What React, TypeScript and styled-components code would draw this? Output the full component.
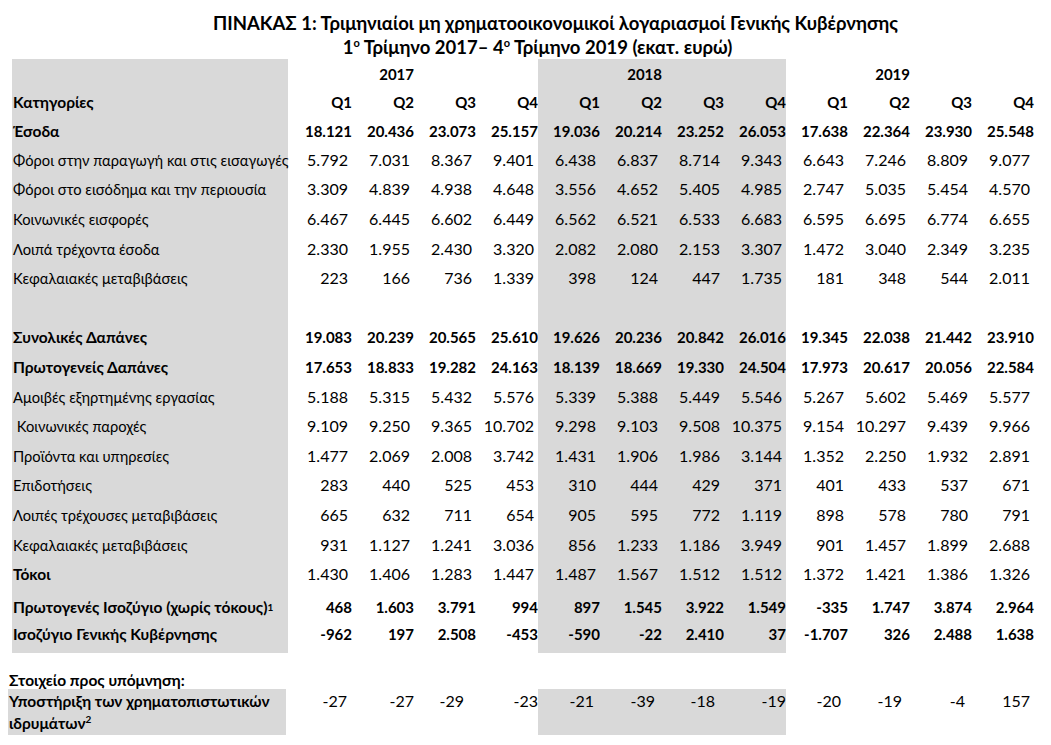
import styled, { createGlobalStyle } from 'styled-components'

const GlobalStyle = createGlobalStyle`
  body {
    margin: 0;
    background: #ffffff;
    color: #000000;
    font-family: Lato, 'Open Sans', 'Noto Sans', sans-serif;
  }
`

const GRAY = '#d9d9d9'

const Page = styled.div`
  width: 1051px;
  height: 745px;
  overflow: hidden;
  box-sizing: border-box;
`

const TitleBlock = styled.header`
  display: flex;
  flex-direction: column;
  align-items: center;
  padding: 11px 0 0 60px;
  height: 59px;
  box-sizing: border-box;
`

const TitleLine = styled.h1<{ $shift?: number }>`
  margin: 0;
  font-size: 18.5px;
  line-height: 24px;
  font-weight: 700;
  white-space: nowrap;
  transform: translateX(${p => p.$shift ?? 0}px);

  sup {
    font-size: 11px;
    line-height: 0;
    vertical-align: 7px;
  }
`

const Table = styled.section<{ $left: number }>`
  display: flex;
  flex-direction: column;
  padding-left: ${p => p.$left}px;
`

const Row = styled.div<{ $h?: number; $labelCol?: number }>`
  display: grid;
  grid-template-columns: ${p => p.$labelCol ?? 278}px repeat(12, 62px);
  height: ${p => p.$h ?? 29.6}px;
`

const LabelCell = styled.div<{ $bold?: boolean; $shaded?: boolean; $gap?: number; $pt?: number; $pb?: number }>`
  display: flex;
  align-items: center;
  margin-right: ${p => p.$gap ?? 2}px;
  padding: ${p => p.$pt ?? 0}px 0 ${p => p.$pb ?? 0}px 1px;
  background: ${p => (p.$shaded === false ? 'transparent' : GRAY)};
  font-size: ${p => (p.$bold ? 15.5 : 14.7)}px;
  font-weight: ${p => (p.$bold ? 700 : 400)};
  white-space: pre;
  line-height: 22px;

  sup {
    font-size: 10px;
    line-height: 0;
    vertical-align: 6px;
  }
`

const StackLabel = styled(LabelCell)`
  flex-direction: column;
  align-items: flex-start;
  justify-content: flex-start;
  padding-top: 1px;
`

const LabelLine = styled.div`
  height: 22px;
  line-height: 22px;
`

const NumCell = styled.div<{ $bold?: boolean; $shaded?: boolean; $pad?: number; $pt?: number; $pb?: number; $top?: boolean }>`
  display: flex;
  align-items: ${p => (p.$top ? 'flex-start' : 'center')};
  justify-content: flex-end;
  padding: ${p => p.$pt ?? 0}px ${p => p.$pad ?? (p.$bold ? 0 : 4)}px ${p => p.$pb ?? 0}px 0;
  background: ${p => (p.$shaded ? GRAY : 'transparent')};
  font-size: ${p => (p.$bold ? 15 : 16)}px;
  font-weight: ${p => (p.$bold ? 700 : 400)};
  white-space: nowrap;
  line-height: 22px;
`

type DataRow = {
  label: string
  sup?: string
  boldLabel?: boolean
  boldNums?: boolean
  values: string[]
  h?: number
  pt?: number
  pb?: number
}

const years = ['2017', '2018', '2019']

const rows: DataRow[] = [
  { label: 'Έσοδα', boldLabel: true, boldNums: true, h: 29, values: '18.121 20.436 23.073 25.157 19.036 20.214 23.252 26.053 17.638 22.364 23.930 25.548'.split(' ') },
  { label: 'Φόροι στην παραγωγή και στις εισαγωγές', values: '5.792 7.031 8.367 9.401 6.438 6.837 8.714 9.343 6.643 7.246 8.809 9.077'.split(' ') },
  { label: 'Φόροι στο εισόδημα και την περιουσία', values: '3.309 4.839 4.938 4.648 3.556 4.652 5.405 4.985 2.747 5.035 5.454 4.570'.split(' ') },
  { label: 'Κοινωνικές εισφορές', values: '6.467 6.445 6.602 6.449 6.562 6.521 6.533 6.683 6.595 6.695 6.774 6.655'.split(' ') },
  { label: 'Λοιπά τρέχοντα έσοδα', values: '2.330 1.955 2.430 3.320 2.082 2.080 2.153 3.307 1.472 3.040 2.349 3.235'.split(' ') },
  { label: 'Κεφαλαιακές μεταβιβάσεις', values: '223 166 736 1.339 398 124 447 1.735 181 348 544 2.011'.split(' ') },
  { label: '', values: Array(12).fill('') },
  { label: 'Συνολικές Δαπάνες', boldLabel: true, boldNums: true, values: '19.083 20.239 20.565 25.610 19.626 20.236 20.842 26.016 19.345 22.038 21.442 23.910'.split(' ') },
  { label: 'Πρωτογενείς Δαπάνες', boldLabel: true, boldNums: true, values: '17.653 18.833 19.282 24.163 18.139 18.669 19.330 24.504 17.973 20.617 20.056 22.584'.split(' ') },
  { label: 'Αμοιβές εξηρτημένης εργασίας', values: '5.188 5.315 5.432 5.576 5.339 5.388 5.449 5.546 5.267 5.602 5.469 5.577'.split(' ') },
  { label: ' Κοινωνικές παροχές', values: '9.109 9.250 9.365 10.702 9.298 9.103 9.508 10.375 9.154 10.297 9.439 9.966'.split(' ') },
  { label: 'Προϊόντα και υπηρεσίες', values: '1.477 2.069 2.008 3.742 1.431 1.906 1.986 3.144 1.352 2.250 1.932 2.891'.split(' ') },
  { label: 'Επιδοτήσεις', values: '283 440 525 453 310 444 429 371 401 433 537 671'.split(' ') },
  { label: 'Λοιπές τρέχουσες μεταβιβάσεις', values: '665 632 711 654 905 595 772 1.119 898 578 780 791'.split(' ') },
  { label: 'Κεφαλαιακές μεταβιβάσεις', values: '931 1.127 1.241 3.036 856 1.233 1.186 3.949 901 1.457 1.899 2.688'.split(' ') },
  { label: 'Τόκοι', boldLabel: true, h: 30, values: '1.430 1.406 1.283 1.447 1.487 1.567 1.512 1.512 1.372 1.421 1.386 1.326'.split(' ') },
  { label: 'Πρωτογενές Ισοζύγιο (χωρίς τόκους)', sup: '1', boldLabel: true, boldNums: true, h: 32, pt: 4, values: '468 1.603 3.791 994 897 1.545 3.922 1.549 -335 1.747 3.874 2.964'.split(' ') },
  { label: 'Ισοζύγιο Γενικής Κυβέρνησης', boldLabel: true, boldNums: true, h: 32, pb: 6, values: '-962 197 2.508 -453 -590 -22 2.410 37 -1.707 326 2.488 1.638'.split(' ') },
]

const memoValues = '-27 -27 -29 -23 -21 -39 -18 -19 -20 -19 -4 157'.split(' ')
const memoPads = [5, 0, 12, 0, 6, 7, 9, 0, 7, 8, 7, 4]

const isShaded = (i: number) => i >= 4 && i < 8

export default function App() {
  return (
    <Page>
      <GlobalStyle />
      <TitleBlock>
        <TitleLine>ΠΙΝΑΚΑΣ 1: Τριμηνιαίοι μη χρηματοοικονομικοί λογαριασμοί Γενικής Κυβέρνησης</TitleLine>
        <TitleLine $shift={-18}>
          1<sup>ο</sup> Τρίμηνο 2017– 4<sup>ο</sup> Τρίμηνο 2019 (εκατ. ευρώ)
        </TitleLine>
      </TitleBlock>

      <Table $left={12}>
        <Row $h={29}>
          <LabelCell />
          {Array.from({ length: 12 }, (_, i) => (
            <NumCell key={i} $bold $shaded={isShaded(i)}>
              {i % 4 === 1 ? years[Math.floor(i / 4)] : ''}
            </NumCell>
          ))}
        </Row>
        <Row $h={28}>
          <LabelCell $bold>Κατηγορίες</LabelCell>
          {Array.from({ length: 12 }, (_, i) => (
            <NumCell key={i} $bold $shaded={isShaded(i)}>
              Q{(i % 4) + 1}
            </NumCell>
          ))}
        </Row>
        {rows.map((r, ri) => (
          <Row key={ri} $h={r.h}>
            <LabelCell $bold={r.boldLabel} $pt={r.pt} $pb={r.pb}>
              {r.label}
              {r.sup && <sup>{r.sup}</sup>}
            </LabelCell>
            {r.values.map((v, i) => (
              <NumCell key={i} $bold={r.boldNums} $shaded={isShaded(i)} $pt={r.pt} $pb={r.pb}>
                {v}
              </NumCell>
            ))}
          </Row>
        ))}
      </Table>

      <Table $left={8}>
        <Row $h={36} $labelCol={282}>
          <LabelCell $bold $shaded={false} $pt={16}>
            Στοιχείο προς υπόμνηση:
          </LabelCell>
        </Row>
        <Row $h={46} $labelCol={282}>
          <StackLabel $bold $gap={4}>
            <LabelLine>Υποστήριξη των χρηματοπιστωτικών</LabelLine>
            <LabelLine>
              ιδρυμάτων<sup>2</sup>
            </LabelLine>
          </StackLabel>
          {memoValues.map((v, i) => (
            <NumCell key={i} $top $pt={1} $shaded={isShaded(i)} $pad={memoPads[i]}>
              {v}
            </NumCell>
          ))}
        </Row>
      </Table>
    </Page>
  )
}
